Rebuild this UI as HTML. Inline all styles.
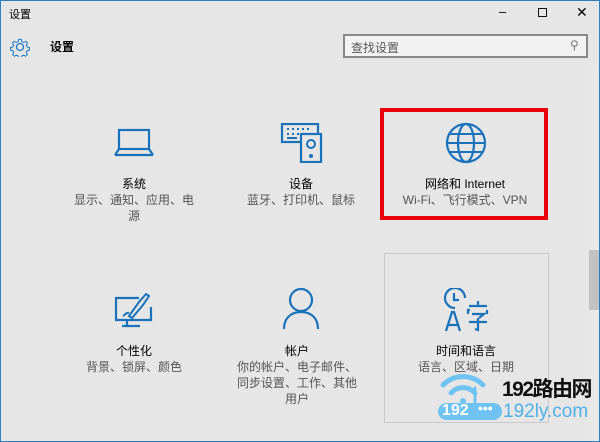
<!DOCTYPE html>
<html><head><meta charset="utf-8"><style>
*{margin:0;padding:0;box-sizing:border-box}
body{width:600px;height:442px;background:#e6e6e6;font-family:"Liberation Sans","Noto Sans CJK SC",sans-serif;position:relative;overflow:hidden;color:#000}
.win{position:absolute;left:0;top:0;width:600px;height:442px;border:1px solid #2d7fc0}
.t{position:absolute;font-size:12px;white-space:nowrap}
.item{position:absolute;text-align:center;width:150px}
.item .h{font-size:12px;color:#000;line-height:16px}
.item .s{font-size:12px;color:#555;line-height:16px}
</style></head><body>
<div class="win"></div>
<div class="t" style="left:9px;top:6px;font-size:11px">设置</div>
<div class="t" style="left:499px;top:4px;font-size:13px">–</div>
<div style="position:absolute;left:538px;top:8px;width:9px;height:9px;border:1px solid #111"></div>
<div class="t" style="left:576px;top:4px;font-size:14px">✕</div>
<svg style="position:absolute;left:10px;top:37px" width="20" height="20" viewBox="0 0 20 20"><circle cx="10" cy="10" r="3.5" fill="none" stroke="#1a78c2" stroke-width="1.3"/><path d="M8.5 1.5h3l.5 2.5 2 1 2.3-1.3 2 2-1.3 2.3 1 2 2.5.5v3l-2.5.5-1 2 1.3 2.3-2 2-2.3-1.3-2 1-.5 2.5h-3l-.5-2.5-2-1-2.3 1.3-2-2 1.3-2.3-1-2-2.5-.5v-3l2.5-.5 1-2-1.3-2.3 2-2 2.3 1.3 2-1z" fill="none" stroke="#1a78c2" stroke-width="1.1" transform="translate(10 10) scale(.9) translate(-10 -10)"/></svg>
<div class="t" style="left:50px;top:38px;font-weight:bold;font-size:12px">设置</div>
<div style="position:absolute;left:343px;top:34px;width:245px;height:24px;border:2px solid #888;background:#f2f2f2"></div>
<div class="t" style="left:351px;top:39px;color:#555;font-size:12px">查找设置</div>
<div class="t" style="left:570px;top:38px;color:#777;font-size:12px">⚲</div>
<div style="position:absolute;left:589px;top:66px;width:10px;height:375px;background:#e8e8e8"></div>
<div style="position:absolute;left:589px;top:250px;width:10px;height:60px;background:#c2c2c2"></div>
<svg style="position:absolute;left:114px;top:128px" width="40" height="30" viewBox="0 0 40 30"><rect x="5" y="2" width="30" height="19" fill="none" stroke="#1a72bb" stroke-width="2.2"/><path d="M1 27h38M1 27l4-6M39 27l-4-6" fill="none" stroke="#1a72bb" stroke-width="2.2"/></svg>
<div class="item" style="left:59px;top:176px"><div class="h">系统</div><div class="s">显示、通知、应用、电<br>源</div></div>
<svg style="position:absolute;left:280px;top:123px" width="44" height="40" viewBox="0 0 44 40"><rect x="2" y="1" width="36" height="18" fill="none" stroke="#1a72bb" stroke-width="2.2"/><path d="M7 6h2M12 6h2M17 6h2M22 6h2M27 6h2M7 11h2M12 11h2M17 11h2M22 11h2M7 15h10" stroke="#1a72bb" stroke-width="2"/><rect x="21" y="11" width="20" height="28" fill="#e6e6e6" stroke="#1a72bb" stroke-width="2.2"/><circle cx="31" cy="21" r="4" fill="none" stroke="#1a72bb" stroke-width="2"/><circle cx="31" cy="33" r="2" fill="#1a72bb"/></svg>
<div class="item" style="left:226px;top:176px"><div class="h">设备</div><div class="s">蓝牙、打印机、鼠标</div></div>
<div style="position:absolute;left:380px;top:108px;width:168px;height:112px;border:4px solid #e8000b"></div>
<svg style="position:absolute;left:445px;top:122px" width="42" height="42" viewBox="0 0 42 42" fill="none" stroke="#1a72bb" stroke-width="2.2"><circle cx="21" cy="21" r="19"/><ellipse cx="21" cy="21" rx="8" ry="19"/><path d="M2 21h38M5 12h32M5 30h32" stroke-width="2"/></svg>
<div class="item" style="left:390px;top:176px;width:150px"><div class="h">网络和 Internet</div><div class="s">Wi-Fi、飞行模式、VPN</div></div>
<svg style="position:absolute;left:113px;top:293px" width="42" height="36" viewBox="0 0 42 36" fill="none" stroke="#1a72bb" stroke-width="2.2"><path d="M26 5H3v22h35V14"/><path d="M14 27v5M9 33h18"/><path d="M16 23l10-14 7-8 3 2-6 9-11 13z" stroke-width="2"/><path d="M10 23c2-1 3-4 6-3" stroke-width="2"/></svg>
<div class="item" style="left:59px;top:343px"><div class="h">个性化</div><div class="s">背景、锁屏、颜色</div></div>
<svg style="position:absolute;left:282px;top:288px" width="38" height="42" viewBox="0 0 38 42" fill="none" stroke="#1a72bb" stroke-width="2.2"><circle cx="19" cy="12" r="11"/><path d="M2 41c0-11 7-17 17-17s17 6 17 17"/></svg>
<div class="item" style="left:222px;top:343px"><div class="h">帐户</div><div class="s">你的帐户、电子邮件、<br>同步设置、工作、其他<br>用户</div></div>
<div style="position:absolute;left:384px;top:253px;width:165px;height:170px;border:1px solid #c8c8c8"></div>
<svg style="position:absolute;left:443px;top:288px" width="46" height="44" viewBox="0 0 46 44" fill="none" stroke="#1a72bb" stroke-width="2.2"><path d="M22 10a10 10 0 1 0-10 10"/><path d="M11 5v7h5"/><path d="M3 43l6-19h2l6 19M5 37h10"/><path d="M26 18h18M35 13v4M27 22h-2v4M44 22v4M29 26h12l-5 4M35 30v12l-3-1M26 34h18"/></svg>
<div class="item" style="left:391px;top:343px"><div class="h">时间和语言</div><div class="s">语言、区域、日期</div></div>
<svg style="position:absolute;left:438px;top:368px" width="50" height="56" viewBox="0 0 50 56" fill="none" stroke="#6ec3f2" stroke-width="5" stroke-linecap="round"><path d="M5 17a28 28 0 0 1 40 0"/><path d="M13 25a16 16 0 0 1 24 0"/><circle cx="25" cy="33" r="3" fill="#6ec3f2" stroke="none"/><path d="M37 20v22" stroke-width="3"/></svg>
<div style="position:absolute;left:438px;top:403px;width:64px;height:17px;border-radius:9px;background:#6ec3f2"></div>
<div class="t" style="left:442px;top:402px;color:#fff;font-weight:bold;font-size:16px">192</div>
<div class="t" style="left:478px;top:400px;color:#fff;font-weight:bold;font-size:14px">•••</div>
<div class="t" style="left:503px;top:401px;color:#4fb0e8;font-size:19px">192ly.com</div>
<div class="t" style="left:502px;top:373px;color:#111;font-weight:bold;font-size:21px;letter-spacing:-1.5px">192路由网</div>
</body></html>
